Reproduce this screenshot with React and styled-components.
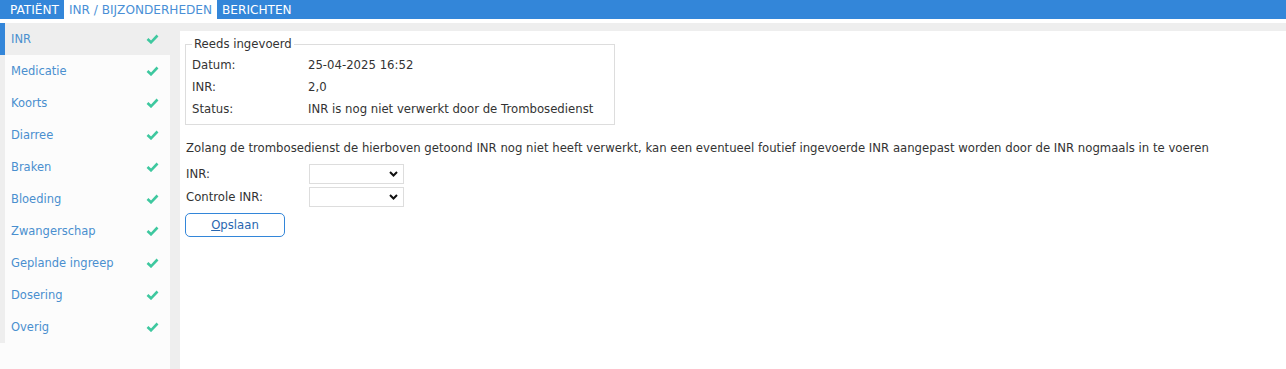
import React from 'react';
import styled, { createGlobalStyle } from 'styled-components';

const GlobalStyle = createGlobalStyle`
  html, body {
    margin: 0;
    padding: 0;
    background: #fff;
  }
  body {
    font-family: "DejaVu Sans", Verdana, sans-serif;
    font-size: 11.7px;
    color: #333;
  }
`;

const BLUE = '#3386d9';

const TopBar = styled.nav`
  display: flex;
  height: 19px;
  padding-left: 5px;
  background: ${BLUE};
`;

const Tab = styled.div`
  display: flex;
  align-items: center;
  padding: 0 5px;
  font-size: 12.1px;
  color: ${({ active }) => (active ? '#4a8fd6' : '#fff')};
  background: ${({ active }) => (active ? '#fff' : 'transparent')};
`;

const Main = styled.div`
  display: flex;
  margin-top: 4px;
  min-height: 346px;
  background: #eee;
`;

const Sidebar = styled.ul`
  width: 170px;
  margin: 0;
  padding: 0;
  list-style: none;
  background: #fcfcfc;
`;

const Item = styled.li`
  display: flex;
  align-items: center;
  justify-content: space-between;
  height: 32px;
  padding: 0 11px 0 6px;
  border-left: 5px solid ${({ active }) => (active ? BLUE : '#eee')};
  background: ${({ active }) => (active ? '#eee' : 'transparent')};
  color: #4a8fcf;
  font-size: 11.5px;
`;

const Check = () => (
  <svg width="13" height="10" viewBox="0 0 13 10">
    <polyline points="1.5,5 5,8.3 11.5,1.5" fill="none" stroke="#3ec89f" strokeWidth="2.6" />
  </svg>
);

const Content = styled.section`
  flex: 1;
  margin: 8px 0 0 10px;
  padding: 0 5px;
  background: #fff;
`;

const Box = styled.fieldset`
  width: 416px;
  margin: 7px 0 0;
  padding: 3px 6px 4px;
  border: 1px solid #ddd;
`;

const Legend = styled.legend`
  padding: 0 2px;
  line-height: 13px;
`;

const Info = styled.div`
  display: grid;
  grid-template-columns: 116px 1fr;
  line-height: 22px;
`;

const Notice = styled.p`
  margin: 17px 0 7px 1px;
  line-height: 13px;
`;

const FormRow = styled.div`
  display: grid;
  grid-template-columns: 123px 95px;
  align-items: center;
  height: 23px;
  padding-left: 1px;
`;

const SelectWrap = styled.div`
  position: relative;
  height: 20px;
`;

const Select = styled.select`
  display: block;
  appearance: none;
  width: 95px;
  height: 20px;
  margin: 0;
  border: 1px solid #ddd;
  background: #fff;
  border-radius: 0;
`;

const Chevron = styled.svg`
  position: absolute;
  right: 6px;
  top: 7px;
  pointer-events: none;
`;

const Button = styled.button`
  display: block;
  width: 100px;
  height: 24px;
  margin-top: 5px;
  border: 1px solid ${BLUE};
  border-radius: 5px;
  background: #fff;
  color: #2a67b0;
  font-family: inherit;
  font-size: 11.7px;
  u {
    text-decoration: underline;
  }
`;

const items = [
  'INR',
  'Medicatie',
  'Koorts',
  'Diarree',
  'Braken',
  'Bloeding',
  'Zwangerschap',
  'Geplande ingreep',
  'Dosering',
  'Overig',
];

const Dropdown = () => (
  <SelectWrap>
    <Select />
    <Chevron width="9" height="6" viewBox="0 0 9 6">
      <polyline points="1,1 4.5,4.5 8,1" fill="none" stroke="#111" strokeWidth="2" />
    </Chevron>
  </SelectWrap>
);

export default function App() {
  return (
    <>
      <GlobalStyle />
      <TopBar>
        <Tab>PATIËNT</Tab>
        <Tab active>INR / BIJZONDERHEDEN</Tab>
        <Tab>BERICHTEN</Tab>
      </TopBar>
      <Main>
        <Sidebar>
          {items.map((name, i) => (
            <Item key={name} active={i === 0}>
              {name}
              <Check />
            </Item>
          ))}
        </Sidebar>
        <Content>
          <Box>
            <Legend>Reeds ingevoerd</Legend>
            <Info>
              <span>Datum:</span>
              <span>25-04-2025 16:52</span>
              <span>INR:</span>
              <span>2,0</span>
              <span>Status:</span>
              <span>INR is nog niet verwerkt door de Trombosedienst</span>
            </Info>
          </Box>
          <Notice>
            Zolang de trombosedienst de hierboven getoond INR nog niet heeft verwerkt, kan een eventueel foutief ingevoerde INR aangepast worden door de INR nogmaals in te voeren
          </Notice>
          <FormRow>
            <span>INR:</span>
            <Dropdown />
          </FormRow>
          <FormRow>
            <span>Controle INR:</span>
            <Dropdown />
          </FormRow>
          <Button>
            <u>O</u>pslaan
          </Button>
        </Content>
      </Main>
    </>
  );
}
